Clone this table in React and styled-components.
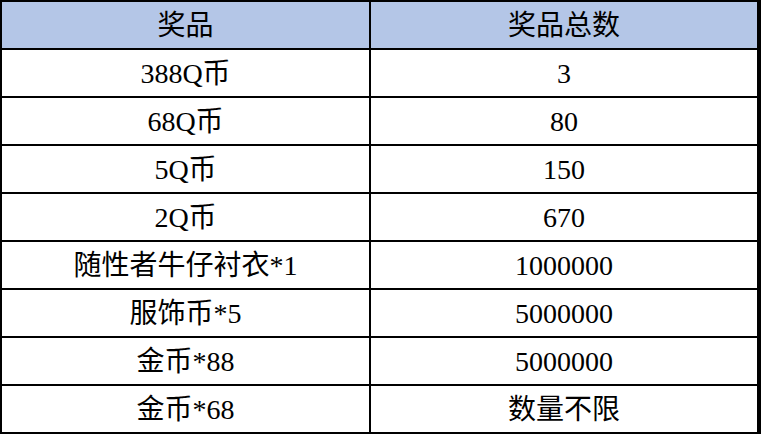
import React from "react";
import styled, { createGlobalStyle } from "styled-components";

const GlobalStyle = createGlobalStyle`
  html, body {
    margin: 0;
    padding: 0;
    background: #fff;
  }
`

// the black grid background shows through the gaps as cell borders
const Table = styled.div`
  display: grid;
  grid-template-columns: 367px 386px;
  grid-auto-rows: 46px;
  gap: 2px;
  padding: 2px 4px 2px 2px;
  width: 761px;
  box-sizing: border-box;
  background: #000;
  font-family: "Liberation Serif", "Times New Roman", "DejaVu Serif", "Noto Sans CJK SC", serif;
  color: #000;
`

const Cell = styled.div`
  display: flex;
  align-items: center;
  justify-content: center;
  background: ${props => (props.head ? "#b4c6e7" : "#fff")};
  font-size: 28px;
  line-height: 1;
  padding-top: 1px;
  white-space: nowrap;
`

const prizes = [
  ["388Q币", "3"],
  ["68Q币", "80"],
  ["5Q币", "150"],
  ["2Q币", "670"],
  ["随性者牛仔衬衣*1", "1000000"],
  ["服饰币*5", "5000000"],
  ["金币*88", "5000000"],
  ["金币*68", "数量不限"],
]

export default function App() {
  return (
    <>
      <GlobalStyle />
      <Table>
        <Cell head>奖品</Cell>
        <Cell head>奖品总数</Cell>
        {prizes.map(([name, total], index) => (
          <React.Fragment key={index}>
            <Cell>{name}</Cell>
            <Cell>{total}</Cell>
          </React.Fragment>
        ))}
      </Table>
    </>
  )
}
